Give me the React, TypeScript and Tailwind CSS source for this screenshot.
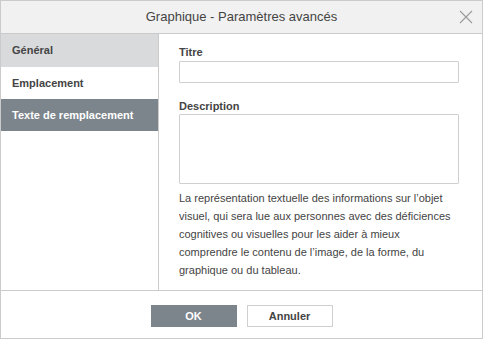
import { useState } from "react";

const tabs = ["Général", "Emplacement", "Texte de remplacement"];

export default function App() {
  const [active, setActive] = useState(2);

  return (
    <div className="w-[483px] h-[339px] flex flex-col border border-[#cbcbcb] bg-white text-[#444] font-['Liberation_Sans',Arial,sans-serif] select-none">
      {/* Header */}
      <div className="h-[32px] shrink-0 relative flex items-center justify-center bg-[#f1f1f1] border-b border-[#cbcbcb] box-content">
        <span className="text-[13px]">Graphique - Paramètres avancés</span>
        <button className="absolute right-[9px] top-[9px] w-[14px] h-[14px] flex items-center justify-center">
          <svg width="14" height="14" viewBox="0 0 14 14" fill="none" stroke="#9a9a9a" strokeWidth="1.1">
            <path d="M1 1L13 13M13 1L1 13" />
          </svg>
        </button>
      </div>

      {/* Body */}
      <div className="h-[256px] shrink-0 flex">
        <div className="w-[157px] shrink-0 border-r border-[#cbcbcb] box-content flex flex-col">
          {tabs.map((t, i) => (
            <button
              key={t}
              onClick={() => setActive(i)}
              className={`shrink-0 px-[11px] text-left text-[11px] font-bold ${
                i === 0 ? "h-[33px]" : "h-[32px]"
              } ${
                i === active
                  ? "bg-[#7d858c] text-white"
                  : i === 0
                  ? "bg-[#d8dadc] text-[#444]"
                  : "text-[#444]"
              }`}
            >
              {t}
            </button>
          ))}
        </div>

        <div className="flex-1 pl-[20px] pt-[11px] flex flex-col">
          <label className="text-[11px] font-bold leading-[14px]">Titre</label>
          <input className="mt-[2px] h-[22px] w-[280px] border border-[#cfcfcf] rounded-[1px] outline-none" />

          <label className="mt-[16px] text-[11px] font-bold leading-[14px]">Description</label>
          <textarea className="mt-[1px] h-[70px] w-[280px] border border-[#cfcfcf] rounded-[1px] outline-none resize-none" />

          <p className="mt-[5px] w-[281px] text-[11px] leading-[18px]">
            La représentation textuelle des informations sur l’objet visuel, qui sera lue aux personnes avec des
            déficiences cognitives ou visuelles pour les aider à mieux comprendre le contenu de l’image, de la forme,
            du graphique ou du tableau.
          </p>
        </div>
      </div>

      {/* Footer */}
      <div className="flex-1 border-t border-[#cbcbcb] flex justify-center items-start gap-[10px] pt-[14px]">
        <button className="w-[86px] h-[22px] bg-[#7d858c] text-white text-[11px] font-bold">OK</button>
        <button className="w-[86px] h-[22px] bg-white border border-[#cfcfcf] text-[#444] text-[11px] font-bold">
          Annuler
        </button>
      </div>
    </div>
  );
}
